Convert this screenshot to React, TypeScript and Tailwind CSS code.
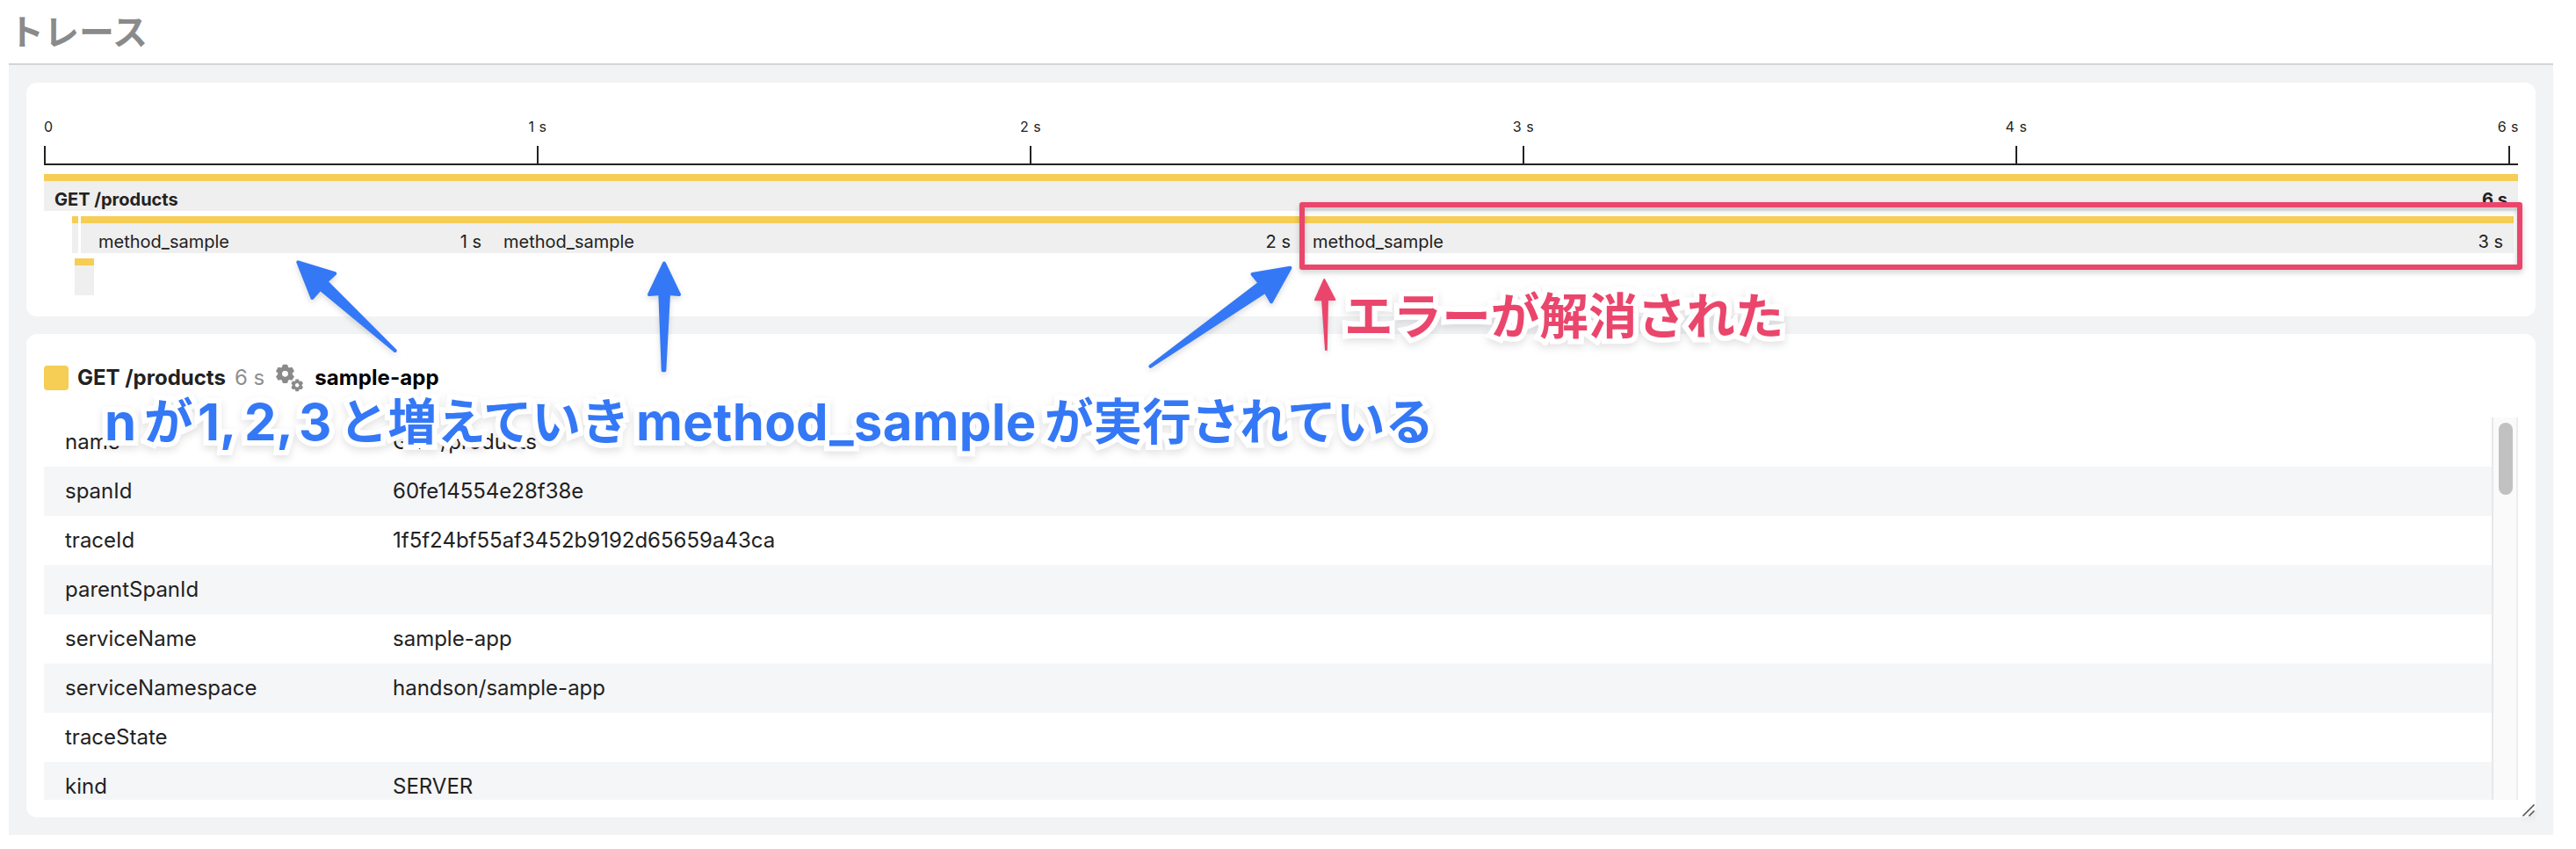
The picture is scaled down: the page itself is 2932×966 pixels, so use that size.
import { ReactNode } from "react";

const attributes: [string, string][] = [
  ["name", "GET /products"],
  ["spanId", "60fe14554e28f38e"],
  ["traceId", "1f5f24bf55af3452b9192d65659a43ca"],
  ["parentSpanId", ""],
  ["serviceName", "sample-app"],
  ["serviceNamespace", "handson/sample-app"],
  ["traceState", ""],
  ["kind", "SERVER"],
];

const innerLabels = ["1 s", "2 s", "3 s", "4 s"];

function Gear({ cx, cy, r, hole }: { cx: number; cy: number; r: number; hole: number }) {
  const body = r * 0.78;
  const top = cy - r;
  return (
    <g fill="currentColor">
      {[0, 60, 120, 180, 240, 300].map((a) => (
        <path
          key={a}
          d={`M${cx - r * 0.24} ${top}H${cx + r * 0.24}L${cx + r * 0.36} ${cy - body * 0.85}H${cx - r * 0.36}Z`}
          transform={`rotate(${a} ${cx} ${cy})`}
        />
      ))}
      <circle cx={cx} cy={cy} r={(body + hole) / 2} fill="none" stroke="currentColor" strokeWidth={body - hole} />
      <circle cx={cx} cy={cy} r={hole} fill="white" />
    </g>
  );
}

function Span({ className, name, time }: { className: string; name?: string; time?: string }) {
  return (
    <div className={"flex h-[42px] shrink-0 justify-between border-t-8 border-[#f6cd55] bg-[#efefef] px-3 pt-[4px] text-[20px] leading-[34px] " + className}>
      <span>{name}</span>
      <span>{time}</span>
    </div>
  );
}

function Note({ className, children }: { className: string; children: ReactNode }) {
  return (
    <span
      className={
        "absolute whitespace-nowrap font-bold leading-none [-webkit-text-stroke:12px_white] [paint-order:stroke_fill] [stroke-linejoin:round] [filter:drop-shadow(0_4px_4px_rgba(0,0,0,0.11))] " +
        className
      }
    >
      {children}
    </span>
  );
}

function Timeline() {
  return (
    <section className="flex h-[266px] flex-col rounded-[12px] bg-white px-5 pt-[38px]">
      <div className="flex h-[34px] text-[16px] leading-6 tracking-[0.5px]">
        <span className="w-[281.5px]">0</span>
        {innerLabels.map((t) => (
          <span key={t} className="w-[561px] text-center">
            {t}
          </span>
        ))}
        <span className="-mr-px grow text-right">6 s</span>
      </div>
      <div className="flex h-[22px] border-b-2 border-[#222]">
        {innerLabels.map((t) => (
          <i key={t} className="w-[561px] border-l-2 border-[#222]" />
        ))}
        <i className="w-[561px] border-l-2 border-[#222]" />
        <i className="w-[11px] border-l-2 border-[#222]" />
      </div>
      <div className="mt-[10px] flex flex-col gap-[6px]">
        <Span className="w-full font-bold" name="GET /products" time="6 s" />
        <div className="flex pl-8">
          <Span className="mr-[3px] w-[7px] px-0!" />
          <Span className="w-[468px] pl-5!" name="method_sample" time="1 s" />
          <Span className="w-[921px] pl-[13px]!" name="method_sample" time="2 s" />
          <Span className="w-[1380px] pl-[13px]!" name="method_sample" time="3 s" />
        </div>
        <Span className="ml-[35px] w-[22px] px-0!" />
      </div>
    </section>
  );
}

function Details() {
  return (
    <section className="flex h-[550px] flex-col rounded-[12px] bg-white px-5 pt-[34px]">
      <div className="flex h-8 items-center text-[24px]">
        <span className="h-7 w-7 rounded bg-[#f6cd55]" />
        <b className="ml-[10px] font-bold">GET /products</b>
        <span className="ml-[10px] text-[#8f8f8f]">6 s</span>
        <svg className="ml-[11px] h-8 w-[34px] overflow-visible text-[#8a8a8a]">
          <Gear cx={12.5} cy={11.3} r={10.6} hole={3.2} />
          <Gear cx={26.2} cy={24.3} r={6.9} hole={2.1} />
        </svg>
        <b className="ml-[12px] font-bold tracking-[0.1px] text-black">sample-app</b>
      </div>
      <div className="mt-[29px] flex h-[435px] overflow-hidden text-[24px]">
        <div className="grow">
          {attributes.map(([k, v], i) => (
            <div key={k} className={"flex h-14 items-center pl-6 " + (i % 2 ? "bg-[#f5f6f8]" : "")}>
              <span className="w-[373px]">{k}</span>
              <span>{v}</span>
            </div>
          ))}
        </div>
        <div className="w-[30px] border-l-2 border-r-2 border-l-[#e8e8e8] border-r-[#ededed] bg-[#fafafa] pl-[6px] pt-[6px]">
          <div className="h-[82px] w-4 rounded-full bg-[#c1c1c1]" />
        </div>
      </div>
    </section>
  );
}

export default function App() {
  return (
    <div className="relative flex h-[966px] w-[2932px] flex-col overflow-hidden bg-white font-['Inter','Noto_Sans_CJK_JP',sans-serif] text-[#222]">
      <h1 className="flex h-[72px] items-center pl-[10px] pt-px text-[40px] font-bold text-[#8a8a8a]">トレース</h1>
      <main className="ml-[10px] flex h-[878px] w-[2896px] flex-col gap-5 border-t-2 border-[#d2d4d6] bg-[#f2f3f5] p-5">
        <Timeline />
        <Details />
      </main>

      <div className="absolute left-[1479px] top-[230px] h-[77px] w-[1392px] rounded-[3px] border-[6px] border-[#ea466c] [filter:drop-shadow(0_3px_3px_rgba(0,0,0,0.2))]" />
      <svg className="absolute left-0 top-0 h-[966px] w-[2932px] [filter:drop-shadow(0_3px_3px_rgba(0,0,0,0.15))]" viewBox="0 0 2932 966">
        <g fill="#3478f6" stroke="#3478f6" strokeWidth="4" strokeLinejoin="round">
          <path d="M339.3 298.3L381.2 311.2L371.3 320.4L449.6 399L364.5 328.6L355.4 339Z" />
          <path d="M756 299.5L773 335L761 334L756.3 421.3H754.7L751.3 334L739 335Z" />
          <path d="M1468.5 304.8L1425.5 312L1433.8 322.1L1309.4 416.8L1440.2 331.5L1447 343.3Z" />
        </g>
        <g fill="#ea466c" stroke="#ea466c" strokeWidth="2" strokeLinejoin="round">
          <path d="M1507.3 318L1519.3 341L1511 341L1509.8 398H1509L1505 341L1497 341.2Z" />
        </g>
        <g stroke="#555" strokeWidth="1.6" fill="none">
          <path d="M2871.5 928.5L2884.5 915.5M2878.5 928.5L2884.5 922.5" />
        </g>
      </svg>

      <Note className="left-[1530px] top-[332px] text-[55.6px] text-[#ea466c]">エラーが解消された</Note>
      <Note className="left-[119px] top-[451px] text-[58px] text-[#3478f6]">n</Note>
      <Note className="left-[164px] top-[452px] text-[55.6px] text-[#3478f6]">が</Note>
      <Note className="left-[225px] top-[451px] text-[58px] text-[#3478f6]">1,</Note>
      <Note className="left-[278px] top-[451px] text-[58px] text-[#3478f6]">2,</Note>
      <Note className="left-[340px] top-[451px] text-[58px] text-[#3478f6]">3</Note>
      <Note className="left-[386px] top-[452px] text-[55.6px] text-[#3478f6]">と増えていき</Note>
      <Note className="left-[724px] top-[451px] text-[58px] tracking-[0.3px] text-[#3478f6]">method_sample</Note>
      <Note className="left-[1189px] top-[452px] text-[55.6px] text-[#3478f6]">が実行されている</Note>
    </div>
  );
}
